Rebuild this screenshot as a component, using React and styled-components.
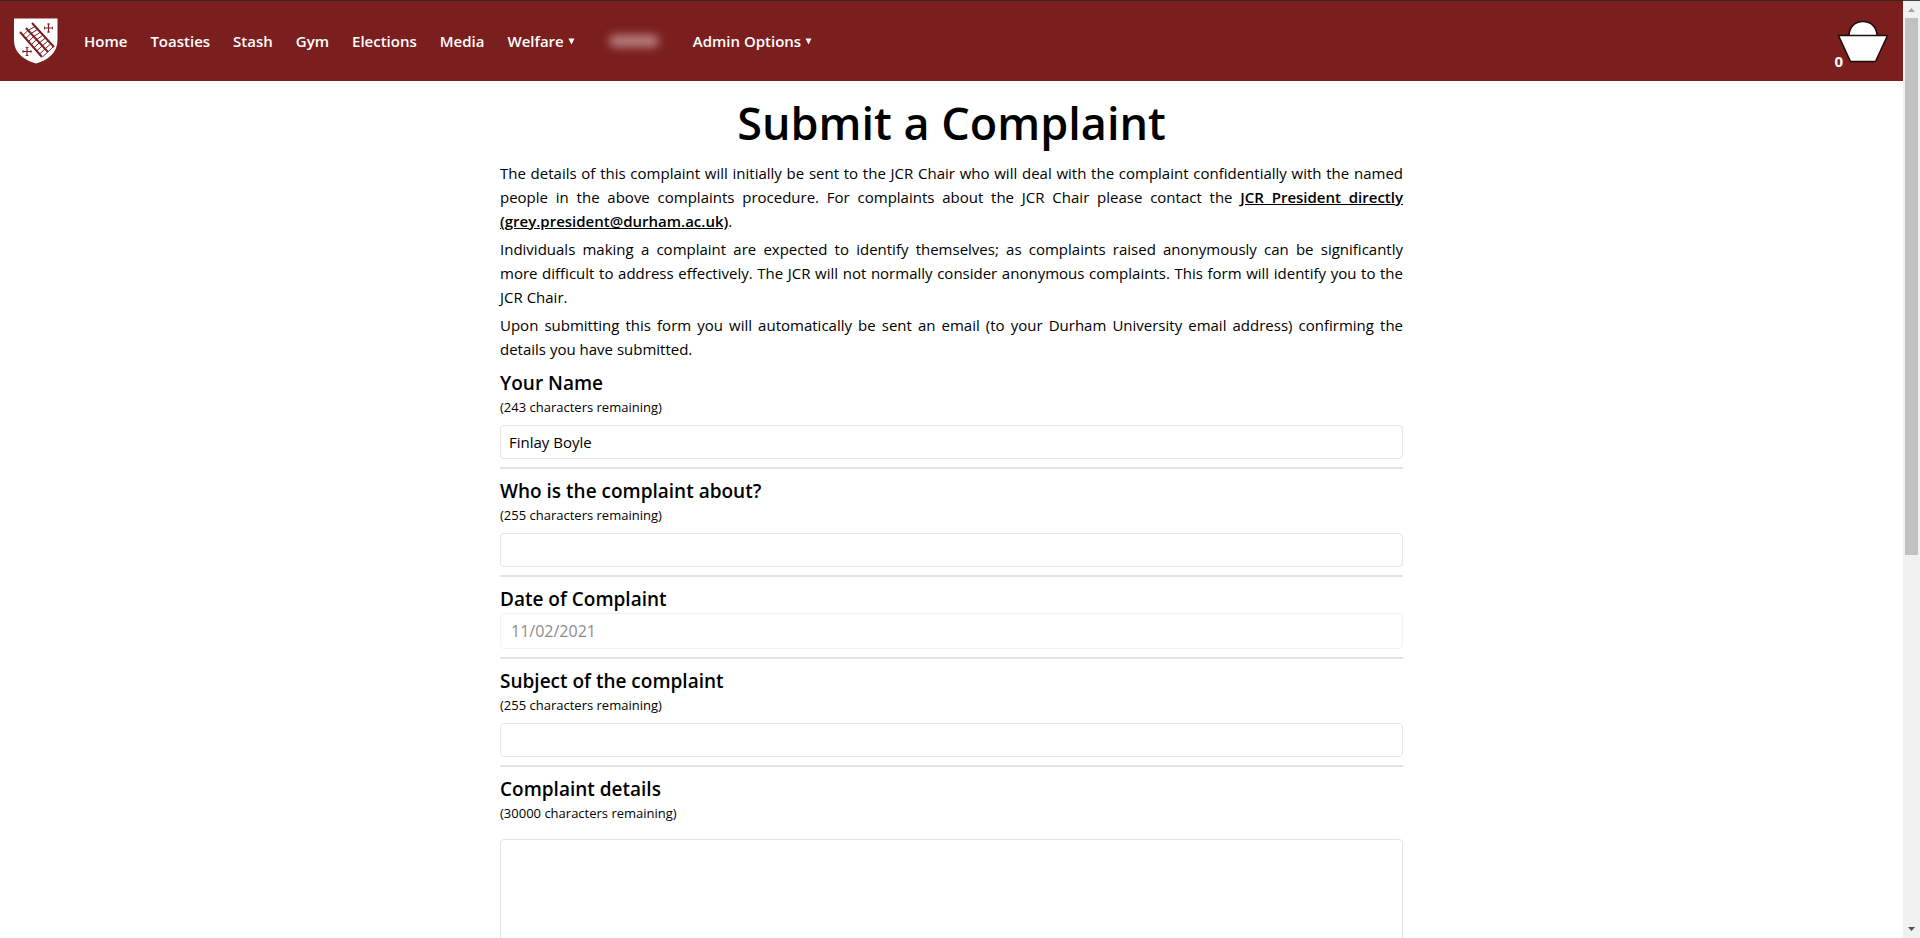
import React, { useState } from "react";
import styled, { createGlobalStyle } from "styled-components";

const GlobalStyle = createGlobalStyle`
  *, *::before, *::after { box-sizing: border-box; }
  body {
    margin: 0;
    background: #fff;
    color: #000;
    font-family: "Open Sans", "Noto Sans", sans-serif;
    font-size: 15px;
    line-height: 24px;
  }
`;

const Shell = styled.div`
  display: flex;
  height: 100vh;
  overflow: hidden;
`;

const Viewport = styled.div`
  flex: 1;
  min-width: 0;
  overflow: hidden;
`;

const Navbar = styled.header`
  display: flex;
  align-items: center;
  justify-content: space-between;
  height: 81px;
  padding: 0 14px;
  background: #7b1e1e;
  border-top: 1px solid #3a2222;
`;

const Nav = styled.nav`
  display: flex;
  align-items: center;
  gap: 23px;
`;

const HomeLogo = styled.a`
  display: flex;
  margin-right: 3px;
`;

const NavLink = styled.a`
  color: #fff;
  font-weight: 600;
  text-decoration: none;
  white-space: nowrap;
`;

const NavMenu = styled.button`
  display: flex;
  align-items: center;
  gap: 4px;
  padding: 0;
  border: 0;
  background: none;
  color: #fff;
  font: inherit;
  font-weight: 600;
  white-space: nowrap;
`;

const Smudge = styled.span`
  width: 50px;
  height: 12px;
  margin: 0 11px;
  border-radius: 6px;
  background: #b98282;
  filter: blur(5px);
`;

const BasketLink = styled.a`
  display: flex;
  align-items: flex-end;
  color: #fff;
  font-weight: 700;
  line-height: 16px;
  text-decoration: none;
`;

const Count = styled.span`
  margin-right: -6px;
  margin-bottom: -6px;
`;

const Page = styled.main`
  width: 58vw;
  max-width: 903px;
  margin: 0 auto;
  padding: 14px 0;
`;

const Title = styled.h1`
  margin: 0;
  font-size: 45px;
  font-weight: 600;
  line-height: 56px;
  text-align: center;
`;

const Intro = styled.section`
  display: flex;
  flex-direction: column;
  gap: 4px;
  margin: 10px 0 8px;
`;

const Paragraph = styled.p`
  margin: 0;
  text-align: justify;
`;

const MailLink = styled.a`
  color: inherit;
  font-weight: 600;
`;

const Field = styled.div`
  display: flex;
  flex-direction: column;
  padding-bottom: 8px;
  margin-bottom: 8px;
  border-bottom: 2px solid #e4e4e4;
`;

const Label = styled.label`
  font-size: 19px;
  font-weight: 600;
  line-height: 28px;
`;

const Remaining = styled.span`
  margin-bottom: ${(p) => (p.$roomy ? 16 : 8)}px;
  font-size: 13px;
  line-height: 20px;
`;

const TextInput = styled.input`
  height: 34px;
  padding: 0 8px;
  border: 1px solid #e4e8e8;
  border-radius: 4px;
  background: #fff;
  color: #000;
  font: inherit;

  &:disabled {
    height: 36px;
    padding: 0 10px;
    border-color: #f2f2f2;
    color: #8c8c8c;
    font-size: 16px;
  }
`;

const TextArea = styled.textarea`
  height: 240px;
  padding: 8px;
  border: 1px solid #e4e4e4;
  border-radius: 4px;
  font: inherit;
  resize: none;
`;

const ScrollTrack = styled.div`
  display: flex;
  flex-direction: column;
  align-items: center;
  justify-content: space-between;
  width: 17px;
  background: #f1f1f1;
  border-top: 1px solid #444;
`;

const ScrollRail = styled.div`
  flex: 1;
  width: 13px;
`;

const ScrollArrow = styled.svg`
  flex: none;
  width: 17px;
  height: 17px;
`;

const ScrollThumb = styled.div`
  height: 59.5%;
  background: #c1c1c1;
`;

const ladder = [0, 1, 2, 3, 4, 5, 6, 7];

function Crest() {
  return (
    <svg width="44" height="46" viewBox="0 0 44 46" aria-hidden="true">
      <path d="M0 0.5H43.5V22C43.5 35 34 42 22 45.5C10 42 0 35 0 22Z" fill="#fff" />
      <g stroke="#7b1e1e" fill="none">
        <path d="M6 14L28 39M12 10L34 34M18 5L40 29" strokeWidth="2" />
        {ladder.map((i) => (
          <path
            key={i}
            d={`M${9 + i * 2.8} ${17.2 + i * 3.1}L${14 + i * 2.8} ${12.5 + i * 3.1}L${21 + i * 2.6} ${8.5 + i * 2.9}`}
            strokeWidth="1"
          />
        ))}
        <path d="M30 10H39M34.5 5.5V14.5M8.5 33.5H17.5M13 29V38" strokeWidth="1.2" />
        <path
          d="M30.500 8.500V11.500M38.500 8.500V11.500M33 6H36M33 14H36M9 32V35M17 32V35M11.500 29.500H14.500M11.500 37.500H14.500"
          strokeWidth="0.8"
        />
      </g>
    </svg>
  );
}

function Caret() {
  return (
    <svg width="7" height="7" viewBox="0 0 7 7" aria-hidden="true">
      <path d="M0.5 0.5H6.5L3.5 6.5Z" fill="#fff" />
    </svg>
  );
}

function Basket() {
  return (
    <svg width="52" height="43" viewBox="0 0 52 43" aria-hidden="true">
      <g fill="#fff" stroke="#1c0c0c" strokeWidth="1.5">
        <path d="M12 16C12 7 18 1.5 26 1.5S40 7 40 16Z" />
        <path d="M1.5 15.5H50.5L38.5 41.5H13.5Z" />
      </g>
    </svg>
  );
}

function CountedField({ id, label, limit, initial = "", multiline = false }) {
  const [value, setValue] = useState(initial);
  const Control = multiline ? TextArea : TextInput;
  return (
    <Field>
      <Label htmlFor={id}>{label}</Label>
      <Remaining $roomy={multiline}>({limit - value.length} characters remaining)</Remaining>
      <Control id={id} maxLength={limit} value={value} onChange={(e) => setValue(e.target.value)} />
    </Field>
  );
}

export default function App() {
  return (
    <Shell>
      <GlobalStyle />
      <Viewport>
        <Navbar>
          <Nav>
            <HomeLogo href="#" aria-label="JCR home"><Crest /></HomeLogo>
            <NavLink href="#">Home</NavLink>
            <NavLink href="#">Toasties</NavLink>
            <NavLink href="#">Stash</NavLink>
            <NavLink href="#">Gym</NavLink>
            <NavLink href="#">Elections</NavLink>
            <NavLink href="#">Media</NavLink>
            <NavMenu type="button">Welfare <Caret /></NavMenu>
            <NavMenu type="button" aria-label="Account"><Smudge /></NavMenu>
            <NavMenu type="button">Admin Options <Caret /></NavMenu>
          </Nav>
          <BasketLink href="#" aria-label="Basket">
            <Count>0</Count>
            <Basket />
          </BasketLink>
        </Navbar>
        <Page>
          <Title>Submit a Complaint</Title>
          <Intro>
            <Paragraph>
              The details of this complaint will initially be sent to the JCR Chair who will deal with the
              complaint confidentially with the named people in the above complaints procedure. For complaints
              about the JCR Chair please contact the{" "}
              <MailLink href="mailto:grey.president@durham.ac.uk">
                JCR President directly (grey.president@durham.ac.uk)
              </MailLink>.
            </Paragraph>
            <Paragraph>
              Individuals making a complaint are expected to identify themselves; as complaints raised
              anonymously can be significantly more{"\u00a0"}difficult to address effectively. The JCR will not
              normally consider anonymous complaints. This form will identify you to the JCR{"\u00a0"}Chair.
            </Paragraph>
            <Paragraph>
              Upon submitting this form you will automatically be sent an email (to your Durham University email
              address) confirming the details you have submitted.
            </Paragraph>
          </Intro>
          <form>
            <CountedField id="name" label="Your Name" limit={255} initial="Finlay Boyle" />
            <CountedField id="about" label="Who is the complaint about?" limit={255} />
            <Field>
              <Label htmlFor="date">Date of Complaint</Label>
              <TextInput id="date" value="11/02/2021" disabled readOnly />
            </Field>
            <CountedField id="subject" label="Subject of the complaint" limit={255} />
            <CountedField id="details" label="Complaint details" limit={30000} multiline />
          </form>
        </Page>
      </Viewport>
      <ScrollTrack aria-hidden="true">
        <ScrollArrow viewBox="0 0 17 17"><path d="M5 11L8.500 7L12 11Z" fill="#a3a3a3" /></ScrollArrow>
        <ScrollRail><ScrollThumb /></ScrollRail>
        <ScrollArrow viewBox="0 0 17 17"><path d="M5 6L12 6L8.500 10Z" fill="#505050" /></ScrollArrow>
      </ScrollTrack>
    </Shell>
  );
}
